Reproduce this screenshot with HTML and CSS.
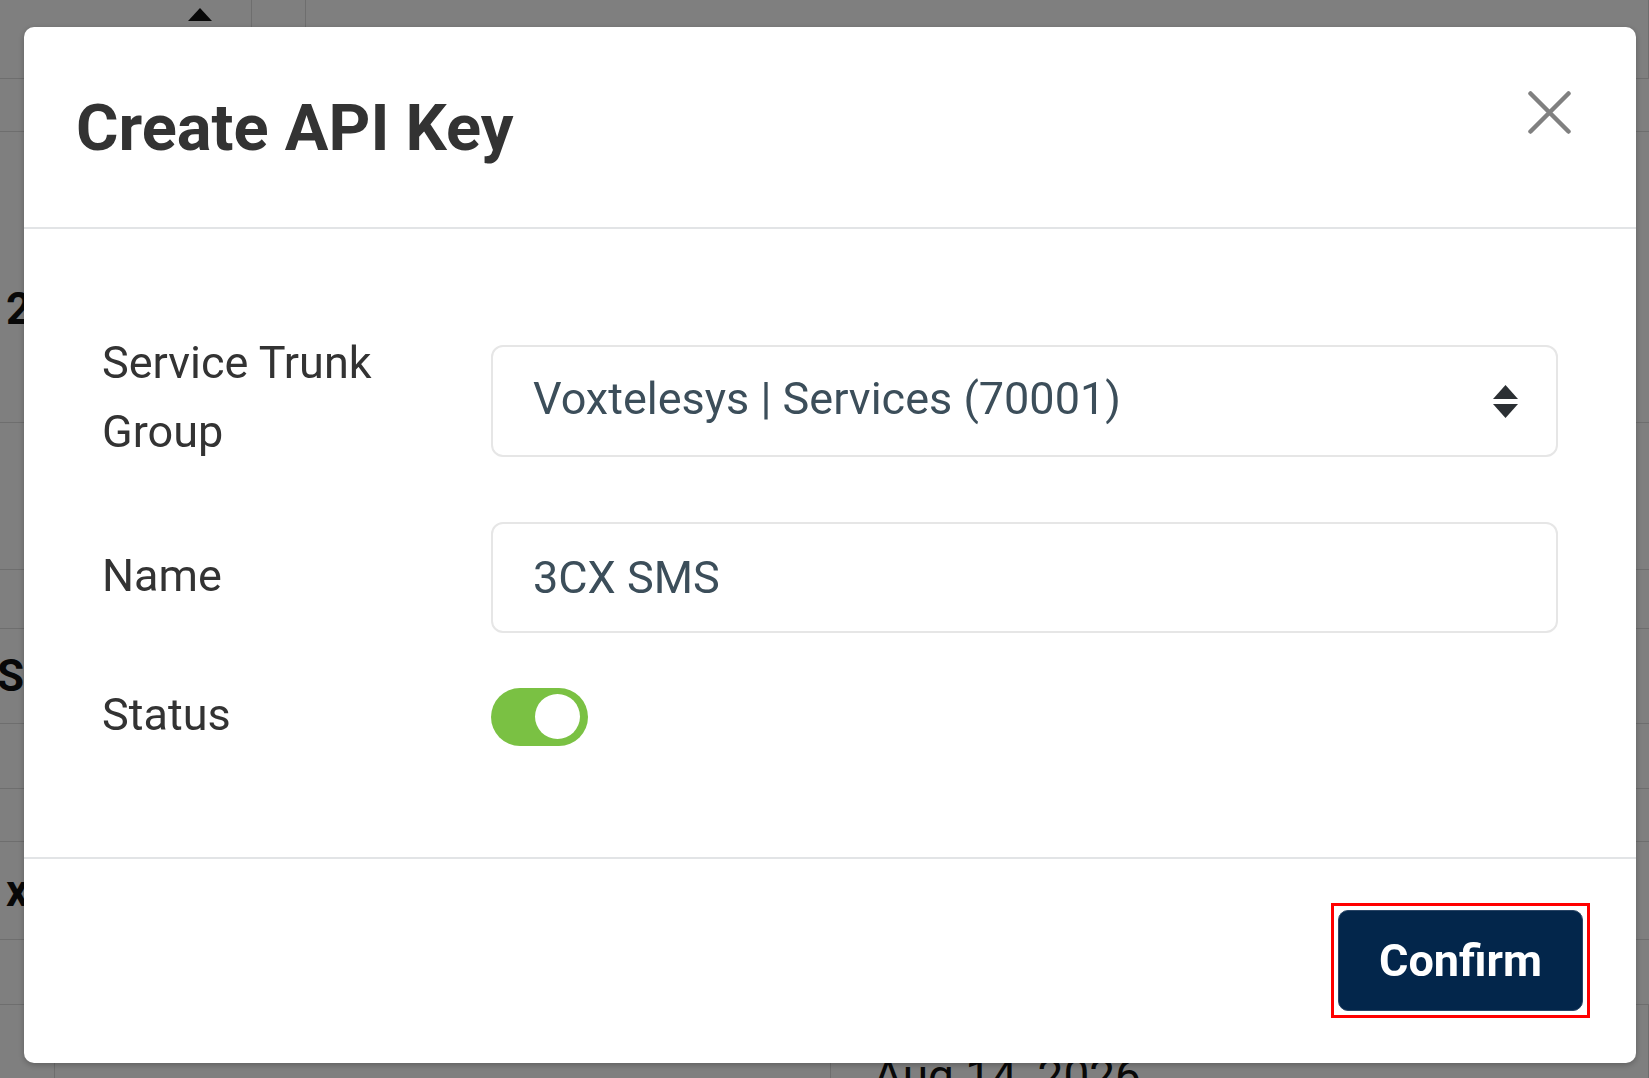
FILE: index.html
```html
<!DOCTYPE html>
<html lang="en">
<head>
    <meta charset="UTF-8">
    <meta name="viewport" content="width=device-width, initial-scale=1.0">
    <title>Create API Key</title>
    <link rel="stylesheet" href="styles.css">
</head>
<body>
    <!-- page behind the modal -->
    <div class="page">
        <div class="bg-head">
            <div class="bg-cell bg-sort"><span class="sort-up"></span></div>
            <div class="bg-cell"></div>
            <div class="bg-cell"></div>
        </div>
        <div class="bg-row"></div>
        <div class="bg-row"><span class="bg-text bold">2</span></div>
        <div class="bg-row"></div>
        <div class="bg-row"></div>
        <div class="bg-row"><span class="bg-text bold shifted">SS</span></div>
        <div class="bg-row"></div>
        <div class="bg-row"></div>
        <div class="bg-row"><span class="bg-text bold">x</span></div>
        <div class="bg-row"></div>
        <div class="bg-row bg-last">
            <div class="bg-cell"></div>
            <div class="bg-cell"></div>
            <div class="bg-cell"><span class="bg-date">Aug 14, 2026</span></div>
        </div>
    </div>

    <div class="backdrop">
        <div class="modal">
            <div class="modal-header">
                <h5 class="modal-title">Create API Key</h5>
                <button class="btn-close" aria-label="Close">
                    <svg width="43" height="43" viewBox="0 0 43 43">
                        <path d="M2.5 2.5 L40.5 40.5 M40.5 2.5 L2.5 40.5" stroke="#808080" stroke-width="4.5" stroke-linecap="round" fill="none"/>
                    </svg>
                </button>
            </div>

            <div class="modal-body">
                <div class="form-row first">
                    <label class="form-label">Service Trunk Group</label>
                    <div class="form-select">
                        <span>Voxtelesys | Services (70001)</span>
                        <svg class="select-arrows" width="25" height="33" viewBox="0 0 25 33">
                            <path d="M12.5 0 L25 14 L0 14 Z" fill="#2b2f33"/>
                            <path d="M0 19 L25 19 L12.5 33 Z" fill="#2b2f33"/>
                        </svg>
                    </div>
                </div>

                <div class="form-row second">
                    <label class="form-label">Name</label>
                    <div class="form-control">3CX SMS</div>
                </div>

                <div class="form-row">
                    <label class="form-label">Status</label>
                    <div class="switch"><span class="knob"></span></div>
                </div>
            </div>

            <div class="modal-footer">
                <span class="focus-ring">
                    <button class="btn-confirm">Confirm</button>
                </span>
            </div>
        </div>
    </div>
</body>
</html>
```

FILE: styles.css
```css
* {
    box-sizing: border-box;
}

body {
    margin: 0;
    font-family: Roboto, 'Liberation Sans', sans-serif;
    background: #fff;
    color: #212529;
    overflow: hidden;
}

/* page behind */
.page {
    width: 1649px;
    height: 1078px;
}

.bg-head {
    height: 79px;
    display: grid;
    grid-template-columns: 252px 54px 1fr;
    border-bottom: 1px solid #dcdcdc;
}

.bg-cell {
    border-right: 1px solid #dcdcdc;
}

.bg-sort {
    padding: 8px 0 0 188px;
}

.sort-up {
    display: block;
    width: 0;
    height: 0;
    border-left: 12px solid transparent;
    border-right: 12px solid transparent;
    border-bottom: 13px solid #111;
}

.bg-row {
    border-bottom: 1px solid #dcdcdc;
    display: flex;
    align-items: center;
    height: 53px;
}

.bg-row:nth-child(3) { height: 291px; align-items: flex-start; padding-top: 151px; }
.bg-row:nth-child(4) { height: 147px; }
.bg-row:nth-child(5) { height: 59px; }
.bg-row:nth-child(6) { height: 95px; }
.bg-row:nth-child(7) { height: 65px; }
.bg-row:nth-child(8) { height: 53px; }
.bg-row:nth-child(9) { height: 98px; }
.bg-row:nth-child(10) { height: 65px; }

.bg-text {
    font-size: 44px;
    color: #111;
    padding-left: 6px;
}

.bg-text.shifted {
    padding-left: 0;
    margin-left: -30px;
}

.bold {
    font-weight: 700;
}

.bg-last {
    display: grid;
    grid-template-columns: 55px 776px 1fr;
    height: 80px;
    border-bottom: none;
    align-items: stretch;
}

.bg-date {
    display: block;
    font-size: 46px;
    line-height: 54px;
    color: #111;
    padding: 44px 0 0 42px;
}

/* modal */
.backdrop {
    position: fixed;
    inset: 0;
    background: rgba(0, 0, 0, 0.5);
    padding: 27px 13px 15px 24px;
}

.modal {
    width: 1612px;
    height: 1036px;
    background: #fff;
    border-radius: 10px;
    box-shadow: 0 2px 6px rgba(0, 0, 0, 0.25);
    display: flex;
    flex-direction: column;
}

.modal-header {
    display: flex;
    justify-content: space-between;
    align-items: flex-start;
    padding: 62px 65px 59px 52px;
    border-bottom: 2px solid #e2e4e6;
}

.modal-title {
    margin: 0;
    font-size: 65px;
    line-height: 79px;
    font-weight: 700;
    color: #333;
}

.btn-close {
    border: none;
    background: none;
    padding: 0;
    margin-top: 2px;
    width: 43px;
    height: 43px;
    cursor: pointer;
}

.btn-close svg {
    display: block;
}

.modal-body {
    flex: 1;
    padding: 99px 78px 0 78px;
}

.form-row {
    display: grid;
    grid-template-columns: 389px 1fr;
    align-items: center;
}

.form-row.first {
    align-items: start;
    margin-bottom: 56px;
}

.form-row.second {
    margin-bottom: 51px;
}

.form-label {
    font-size: 45px;
    line-height: 69px;
    color: #333;
    max-width: 340px;
    margin-top: -4px;
}

.form-row.first .form-label {
    margin-top: 0;
}

.form-select,
.form-control {
    height: 112px;
    border: 2px solid #e6e6e6;
    border-radius: 12px;
    padding: 0 38px 0 40px;
    font-size: 45px;
    color: #3c4e5a;
    display: flex;
    align-items: center;
}

.form-select {
    margin-top: 17px;
    justify-content: space-between;
}

.form-select span {
    margin-top: -6px;
}

.form-control {
    height: 111px;
}

.select-arrows {
    display: block;
}

.switch {
    width: 97px;
    height: 58px;
    border-radius: 29px;
    background: #7ac143;
    display: flex;
    justify-content: flex-end;
    align-items: center;
    padding-right: 8px;
}

.knob {
    width: 45px;
    height: 45px;
    border-radius: 50%;
    background: #fff;
}

.modal-footer {
    border-top: 2px solid #e2e4e6;
    padding: 44px 46px 0 0;
    display: flex;
    justify-content: flex-end;
    align-items: flex-start;
    height: 206px;
}

.focus-ring {
    display: block;
    border: 3px solid #ff0000;
    padding: 4px;
}

.btn-confirm {
    display: block;
    height: 101px;
    padding: 0 40px;
    border: 1px solid #2a4566;
    border-radius: 10px;
    background: #03264b;
    color: #fff;
    font-family: Roboto, 'Liberation Sans', sans-serif;
    font-size: 45px;
    font-weight: 700;
    cursor: pointer;
}
```
